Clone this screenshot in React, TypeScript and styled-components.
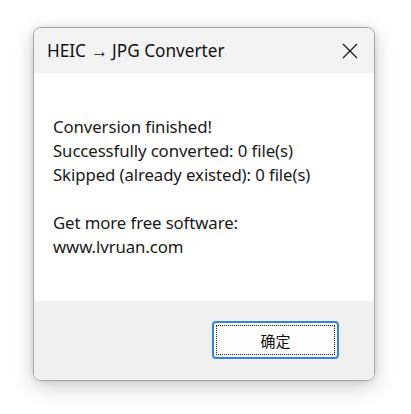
import React from "react";
import styled, { createGlobalStyle } from "styled-components";

const Global = createGlobalStyle`
  html, body { margin: 0; padding: 0; background: #ffffff; }
  body { font-family: "Segoe UI", "Noto Sans", "Open Sans", sans-serif; }
`;

const Page = styled.div`
  width: 411px;
  height: 414px;
  padding: 27px 0 0 33px;
  box-sizing: border-box;
`;

const Window = styled.div`
  width: 342px;
  height: 354px;
  box-sizing: border-box;
  border: 1px solid #a3a3a3;
  border-radius: 8px;
  overflow: hidden;
  display: flex;
  flex-direction: column;
  box-shadow: 0 6px 20px rgba(0, 0, 0, 0.2), 0 0 6px rgba(0, 0, 0, 0.08);
`;

const TitleBar = styled.div`
  height: 45px;
  flex: none;
  background: #f3f3f3;
  display: flex;
  align-items: center;
  justify-content: space-between;
  padding: 0 16px 0 13px;
`;

const Title = styled.span`
  font-size: 17.2px;
  color: #111;
`;

const CloseBtn = styled.div`
  width: 16px;
  height: 16px;
  display: flex;
  align-items: center;
  justify-content: center;
  margin-top: 1px;
`;

const Content = styled.div`
  flex: 1;
  background: #ffffff;
  padding: 42px 19px 0;
`;

const Line = styled.div<{ $gap?: boolean }>`
  font-size: 16.8px;
  line-height: 24px;
  color: #1a1a1a;
  letter-spacing: -0.1px;
  margin-top: ${(p) => (p.$gap ? "24px" : "0")};
`;

const Footer = styled.div`
  height: 79px;
  flex: none;
  background: #f0f0f0;
  display: flex;
  justify-content: flex-end;
  padding: 20px 35px 0 0;
  box-sizing: border-box;
`;

const OkButton = styled.button`
  width: 127px;
  height: 38px;
  border: 2px solid #2e86e0;
  border-radius: 4px;
  background: #fdfdfd;
  padding: 2px;
  box-sizing: border-box;
  display: flex;
  cursor: default;
`;

const FocusRing = styled.span`
  flex: 1;
  border: 1px dotted #222;
  display: flex;
  align-items: center;
  justify-content: center;
  font-family: "Noto Sans CJK SC", sans-serif;
  font-size: 15px;
  color: #111;
`;

export default function App() {
  return (
    <>
      <Global />
      <Page>
        <Window>
          <TitleBar>
            <Title>HEIC → JPG Converter</Title>
            <CloseBtn>
              <svg width="16" height="16" viewBox="0 0 16 16">
                <path d="M1 1 L15 15 M15 1 L1 15" stroke="#1a1a1a" strokeWidth="1.3" />
              </svg>
            </CloseBtn>
          </TitleBar>
          <Content>
            <Line>Conversion finished!</Line>
            <Line>Successfully converted: 0 file(s)</Line>
            <Line>Skipped (already existed): 0 file(s)</Line>
            <Line $gap>Get more free software:</Line>
            <Line>www.lvruan.com</Line>
          </Content>
          <Footer>
            <OkButton>
              <FocusRing>确定</FocusRing>
            </OkButton>
          </Footer>
        </Window>
      </Page>
    </>
  );
}
